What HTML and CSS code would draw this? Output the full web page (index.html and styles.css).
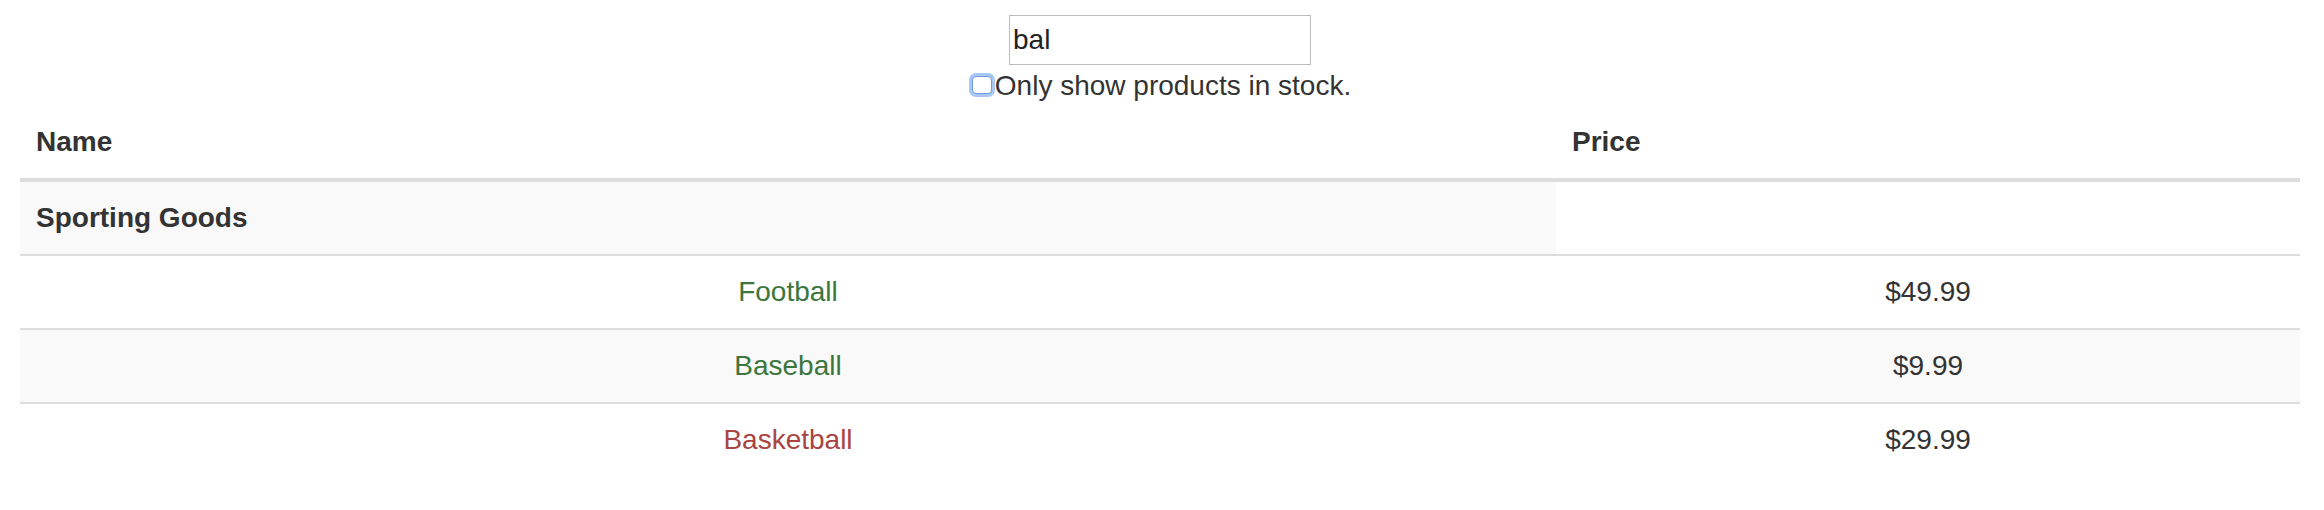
FILE: index.html
```html
<!DOCTYPE html>
<html lang="en">
<head>
<meta charset="utf-8">
<title>Filterable Product Table</title>
<link rel="stylesheet" href="styles.css">
</head>
<body>
<div class="app">
  <form class="search">
    <input class="search-input" type="text" value="bal">
    <label class="stock">
      <input class="stock-check" type="checkbox">Only show products in stock.
    </label>
  </form>
  <table class="table">
    <colgroup>
      <col class="col-name">
      <col class="col-price">
    </colgroup>
    <thead>
      <tr><th>Name</th><th>Price</th></tr>
    </thead>
    <tbody>
      <tr><th>Sporting Goods</th></tr>
      <tr><td class="ok">Football</td><td>$49.99</td></tr>
      <tr><td class="ok">Baseball</td><td>$9.99</td></tr>
      <tr><td class="out">Basketball</td><td>$29.99</td></tr>
    </tbody>
  </table>
</div>
</body>
</html>
```

FILE: styles.css
```css
html, body {
  margin: 0;
  padding: 0;
  background: #fff;
}

body {
  font-family: "Liberation Sans", Arial, Helvetica, sans-serif;
  font-size: 28px;
  line-height: 40px;
  color: #333;
}

.app {
  padding: 0 24px 0 20px;
}

.search {
  display: flex;
  flex-direction: column;
  align-items: center;
  padding-top: 15px;
  margin: 0;
}

.search-input {
  box-sizing: border-box;
  width: 302px;
  height: 50px;
  margin: 0;
  padding: 0 3px;
  border: 1px solid #bdbdbd;
  border-radius: 0;
  font-family: inherit;
  font-size: 28px;
  color: #222;
  background: #fff;
  outline: none;
}

.stock {
  display: flex;
  align-items: center;
  height: 41px;
  white-space: nowrap;
}

.stock-check {
  appearance: none;
  -webkit-appearance: none;
  box-sizing: border-box;
  width: 20px;
  height: 18px;
  margin: 0 3px 0 3px;
  border: 1px solid #6f9be0;
  border-radius: 4px;
  background: #fff;
  box-shadow: 0 0 0 3px #a9c7f5;
  position: relative;
  top: -1px;
}

.table {
  width: 100%;
  border-collapse: collapse;
  border-spacing: 0;
  background: #fff;
}

.col-name {
  width: 1536px;
}

.table th,
.table td {
  padding: 16px;
  line-height: 40px;
  vertical-align: top;
  border-top: 2px solid #ddd;
}

.table thead th {
  text-align: left;
  font-weight: bold;
  border-top: 0;
  border-bottom: 4px solid #ddd;
  vertical-align: bottom;
}

.table tbody th {
  text-align: left;
  font-weight: bold;
}

.table tbody td {
  text-align: center;
}

.table tbody tr:nth-child(odd) > * {
  background: #f9f9f9;
}

.ok {
  color: #3c763d;
}

.out {
  color: #a94442;
}
```
